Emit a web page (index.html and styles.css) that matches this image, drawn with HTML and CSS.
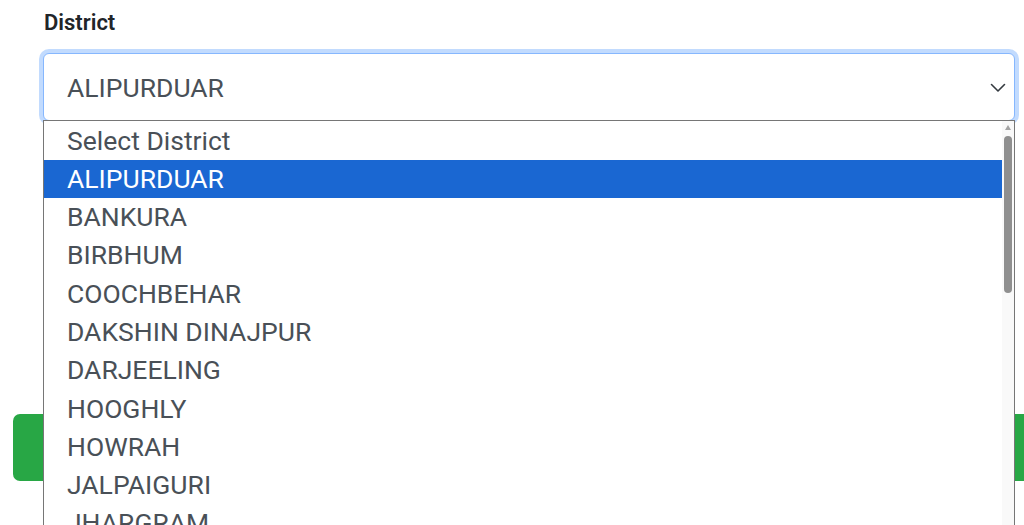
FILE: index.html
```html
<!DOCTYPE html>
<html>
<head>
<meta charset="utf-8">
<link rel="stylesheet" href="styles.css">
</head>
<body>
<div class="page">
  <div class="field">
    <label class="label">District</label>
    <div class="select-wrap">
      <div class="select">
        <span class="value">ALIPURDUAR</span>
        <svg class="chev" width="16" height="10" viewBox="0 0 16 10"><path d="M1.5 1.5 L8 8 L14.5 1.5" fill="none" stroke="#343a40" stroke-width="1.6" stroke-linecap="round" stroke-linejoin="round"/></svg>
      </div>
      <div class="dropdown">
        <div class="options">
          <div class="opt">Select District</div>
          <div class="opt sel">ALIPURDUAR</div>
          <div class="opt">BANKURA</div>
          <div class="opt">BIRBHUM</div>
          <div class="opt">COOCHBEHAR</div>
          <div class="opt">DAKSHIN DINAJPUR</div>
          <div class="opt">DARJEELING</div>
          <div class="opt">HOOGHLY</div>
          <div class="opt">HOWRAH</div>
          <div class="opt">JALPAIGURI</div>
          <div class="opt">JHARGRAM</div>
        </div>
        <div class="scrollbar">
          <div class="arrow up"></div>
          <div class="track"><div class="thumb"></div></div>
          <div class="arrow down"></div>
        </div>
      </div>
    </div>
  </div>
  <div class="btn"></div>
</div>
</body>
</html>
```
FILE: styles.css
```css
html, body {
  margin: 0;
  padding: 0;
  background: #fff;
  overflow: hidden;
}
body {
  width: 1024px;
  height: 525px;
  font-family: Roboto, "Liberation Sans", sans-serif;
}
.page {
  position: relative;
  height: 525px;
  padding-top: 8px;
  box-sizing: border-box;
}
.field {
  padding-left: 43px;
  padding-right: 9px;
}
.label {
  display: block;
  margin-left: 1px;
  font-size: 22px;
  font-weight: 600;
  color: #212529;
  line-height: 29px;
}
.select-wrap {
  position: relative;
  margin-top: 16px;
  z-index: 2;
}
.select {
  height: 68px;
  box-sizing: border-box;
  border: 1px solid #86b7fe;
  border-radius: 6px;
  box-shadow: 0 0 0 4px rgba(13, 110, 253, 0.25);
  display: flex;
  align-items: center;
  padding-left: 23px;
  padding-right: 8px;
  font-size: 26.5px;
  color: #495057;
  background: #fff;
}
.value {
  flex: 1;
  padding-top: 1px;
}
.chev {
  margin-top: 2px;
}
.dropdown {
  position: absolute;
  left: 0;
  right: 0;
  top: 67px;
  height: 420px;
  border: 1px solid #767676;
  border-bottom: none;
  background: #fff;
  display: flex;
}
.options {
  flex: 1;
  padding-top: 0.5px;
}
.opt {
  height: 38.3px;
  line-height: 38.3px;
  padding-left: 23px;
  font-size: 26.5px;
  color: #495057;
  white-space: nowrap;
}
.opt.sel {
  background: #1a67d2;
  color: #fff;
}
.scrollbar {
  width: 12px;
  background: #f9f9f9;
  display: flex;
  flex-direction: column;
  align-items: center;
}
.arrow {
  width: 0;
  height: 0;
  border-left: 3.5px solid transparent;
  border-right: 3.5px solid transparent;
}
.arrow.up {
  margin-top: 4px;
  border-bottom: 5px solid #a3a3a3;
}
.arrow.down {
  margin-top: auto;
  border-top: 5px solid #a3a3a3;
}
.track {
  width: 100%;
  display: flex;
  justify-content: center;
  padding-top: 6px;
}
.thumb {
  width: 8px;
  height: 157px;
  background: #8f8f8f;
  border-radius: 4px;
}
.btn {
  position: relative;
  margin-top: 293px;
  margin-left: 13px;
  width: 1040px;
  height: 67px;
  background: #28a745;
  border-radius: 7px;
  z-index: 1;
}
```
